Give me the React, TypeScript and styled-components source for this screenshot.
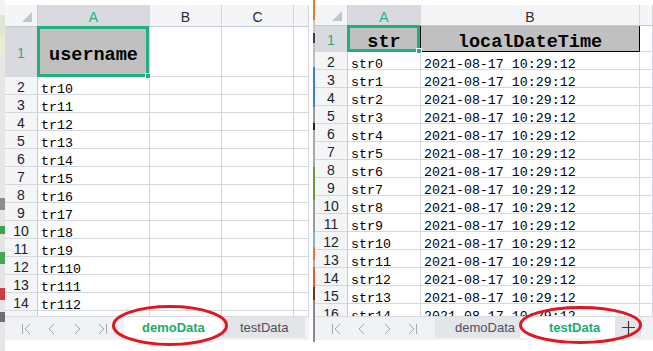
import React from 'react';
import styled, { createGlobalStyle } from 'styled-components';

const GlobalStyle = createGlobalStyle`
  *, *::before, *::after { box-sizing: border-box; }
  html, body {
    margin: 0;
    padding: 0;
    background: #fff;
  }
  body {
    width: 653px;
    height: 351px;
    overflow: hidden;
    font-family: "Liberation Sans", Arial, sans-serif;
  }
`;

const GREEN = '#21b07b';
const GRID = '#d4d7de';
const HEAD_BG = '#f4f5f7';
const HEAD_ON = '#d8dadf';

const Page = styled.div`
  position: relative;
  display: flex;
  width: 653px;
  height: 351px;
  overflow: hidden;
  background: #fff;
`;

// slivers of other windows peeking in at the edges
const Strip = styled.div<{ $w: number }>`
  flex: none;
  width: ${p => p.$w}px;
  display: flex;
  flex-direction: column;
`;

const Seg = styled.div<{ $h: number; $c: string }>`
  flex: none;
  height: ${p => p.$h}px;
  background: ${p => p.$c};
`;

const Gap = styled.div<{ $w: number }>`
  flex: none;
  width: ${p => p.$w}px;
  background: #fff;
`;

const Panel = styled.div<{ $w: number }>`
  flex: none;
  width: ${p => p.$w}px;
  height: 351px;
  display: flex;
  flex-direction: column;
  padding-top: 5px;
  background: #fff;
`;

const Sheet = styled.div<{ $cols: string; $rows: string }>`
  display: grid;
  grid-template-columns: ${p => p.$cols};
  grid-template-rows: ${p => p.$rows};
  height: 311px;
  overflow: hidden;
  background: #fff;
`;

const Corner = styled.div`
  background: ${HEAD_BG};
  border-right: 1px solid #cdd0d6;
  border-bottom: 1px solid #c6c9cf;
  display: flex;
  align-items: flex-end;
  justify-content: flex-end;
  padding: 0 5px 4px 0;

  &::after {
    content: '';
    width: 0;
    height: 0;
    border-left: 10px solid transparent;
    border-bottom: 10px solid #c3c5ca;
  }
`;

const ColHead = styled.div<{ $on?: boolean }>`
  background: ${p => (p.$on ? HEAD_ON : HEAD_BG)};
  color: ${p => (p.$on ? '#2aae7d' : '#2a2a33')};
  border-right: 1px solid #d6d8dd;
  border-bottom: 1px solid #c6c9cf;
  font-size: 14px;
  line-height: 20px;
  padding-top: 2px;
  text-align: center;
  overflow: hidden;
`;

const RowHead = styled.div<{ $on?: boolean }>`
  background: ${p => (p.$on ? HEAD_ON : HEAD_BG)};
  color: ${p => (p.$on ? '#2aae7d' : '#22222a')};
  border-right: 1px solid #c6c9cf;
  border-bottom: 1px solid #d6d8dd;
  font-size: 14px;
  padding-top: 2px;
  display: flex;
  align-items: center;
  justify-content: center;
  overflow: hidden;
`;

const Cell = styled.div<{ $fill?: string; $edge?: string }>`
  background: ${p => p.$fill ?? '#fff'};
  border-right: 1px solid ${p => p.$edge ?? GRID};
  border-bottom: 1px solid ${p => p.$edge ?? GRID};
  color: #000;
  font-family: "Liberation Mono", "DejaVu Sans Mono", monospace;
  font-size: 13.3px;
  line-height: 17px;
  padding: 3.5px 3px 0;
  white-space: nowrap;
`;

const TitleCell = styled(Cell)<{ $sel?: boolean }>`
  position: ${p => (p.$sel ? 'relative' : 'static')};
  display: flex;
  align-items: center;
  justify-content: center;
  padding: 7px 0 0;
  font-size: 18.5px;
  line-height: normal;
  font-weight: bold;
`;

const Frame = styled.div`
  position: absolute;
  top: -1px;
  left: -1px;
  right: 0;
  bottom: -1px;
  border: 3px solid ${GREEN};
  pointer-events: none;
  z-index: 2;

  &::after {
    content: '';
    position: absolute;
    right: -5px;
    bottom: -5px;
    width: 6px;
    height: 6px;
    background: ${GREEN};
    border: 1px solid #fff;
  }
`;

const TabBar = styled.div`
  flex: none;
  height: 24px;
  display: flex;
  align-items: flex-start;
  background: #f1f2f5;
  border-top: 1px solid #d9dbe0;
`;

const Nav = styled.div`
  flex: none;
  display: flex;
  align-items: center;
  height: 23px;
  padding-left: 9px;
`;

const NavBtn = styled.div`
  width: 25px;
  display: flex;
  justify-content: center;
  color: #a3a6ab;
`;

const Tab = styled.div<{ $w: number; $pl: number; $ml: number; $on?: boolean }>`
  flex: none;
  width: ${p => p.$w}px;
  height: 21px;
  margin-left: ${p => p.$ml}px;
  padding: 1px 0 0 ${p => p.$pl}px;
  background: ${p => (p.$on ? '#fff' : '#e4e5e9')};
  color: ${p => (p.$on ? '#20ab6d' : '#4e4e5c')};
  font-size: 13px;
  line-height: 20px;
  font-weight: ${p => (p.$on ? 700 : 400)};
  white-space: nowrap;
`;

const AddTab = styled.div`
  flex: none;
  width: 26px;
  height: 21px;
  background: #e4e5e9;
  display: flex;
  align-items: center;
  justify-content: center;
  color: #3a3a3a;
`;

const Footer = styled.div`
  flex: 1;
  background: #fff;
`;

const Marks = styled.svg`
  position: absolute;
  left: 0;
  top: 0;
  pointer-events: none;
`;

const Arrow = ({ d }: { d: string }) => (
  <svg width="12" height="12" viewBox="0 0 12 12" fill="none" stroke="currentColor" strokeWidth={1}>
    <path d={d} />
  </svg>
);

const NavArrows = () => (
  <Nav>
    <NavBtn><Arrow d="M1.5 1v10M9 1L4 6l5 5" /></NavBtn>
    <NavBtn><Arrow d="M8 1L3 6l5 5" /></NavBtn>
    <NavBtn><Arrow d="M4 1l5 5-5 5" /></NavBtn>
    <NavBtn><Arrow d="M3 1l5 5-5 5M10.5 1v10" /></NavBtn>
  </Nav>
);

const leftStrip: [number, string][] = [
  [15, '#f2f2f2'], [20, '#dfe6d8'], [20, '#ecebd6'], [143, '#e6e6e6'], [12, '#8e8e8e'],
  [16, '#e4e4e4'], [8, '#3fa34d'], [18, '#e4e4e4'], [12, '#4aa55a'], [24, '#e4e4e4'],
  [12, '#d03a40'], [12, '#e6e6e6'], [10, '#707070'], [29, '#e6e6e6'],
];

const rightStrip: [number, string][] = [
  [20, '#e0783a'], [13, '#c8c8c8'], [10, '#3a3a4a'], [24, '#bdbdbd'], [40, '#3b82c4'],
  [16, '#9a9a9a'], [7, '#222'], [37, '#a8a8a8'], [33, '#6a9a3a'], [33, '#9a9a9a'],
  [14, '#7fb6d8'], [13, '#e07838'], [7, '#b0b0b0'], [20, '#d9622b'], [13, '#5a3a20'],
  [42, '#8a8a8a'], [9, '#fff'],
];

const leftRows = Array.from({ length: 14 }, (_, i) => ({ n: i + 2, name: `tr1${i}` }));
const rightRows = Array.from({ length: 15 }, (_, i) => ({ n: i + 2, name: `str${i}` }));

const App = () => {
  return (
    <>
      <GlobalStyle />
      <Page>
        <Strip $w={5}>
          {leftStrip.map(([h, c], i) => <Seg key={i} $h={h} $c={c} />)}
        </Strip>

        <Panel $w={304}>
          <Sheet $cols="33px 112px 72px 72px 15px" $rows="22px 50px repeat(14, 18px)">
            <Corner />
            <ColHead $on>A</ColHead>
            <ColHead>B</ColHead>
            <ColHead>C</ColHead>
            <ColHead />

            <RowHead $on>1</RowHead>
            <TitleCell $fill="#c0c0c0" $sel>
              username
              <Frame />
            </TitleCell>
            <Cell />
            <Cell />
            <Cell />

            {leftRows.map(r => (
              <React.Fragment key={r.n}>
                <RowHead>{r.n}</RowHead>
                <Cell>{r.name}</Cell>
                <Cell />
                <Cell />
                <Cell />
              </React.Fragment>
            ))}
          </Sheet>
          <TabBar>
            <NavArrows />
            <Tab $w={98} $pl={18} $ml={10} $on>demoData</Tab>
            <Tab $w={82} $pl={17} $ml={1}>testData</Tab>
          </TabBar>
          <Footer />
        </Panel>

        <Gap $w={4} />
        <Strip $w={2}>
          {rightStrip.map(([h, c], i) => <Seg key={i} $h={h} $c={c} />)}
        </Strip>

        <Panel $w={338}>
          <Sheet $cols="33px 73px 219px 13px" $rows="21px 26px repeat(15, 18px)">
            <Corner />
            <ColHead $on>A</ColHead>
            <ColHead>B</ColHead>
            <ColHead />

            <RowHead $on>1</RowHead>
            <TitleCell $fill="#c0c0c0" $edge="#000" $sel>
              str
              <Frame />
            </TitleCell>
            <TitleCell $fill="#c0c0c0" $edge="#000">localDateTime</TitleCell>
            <Cell />

            {rightRows.map(r => (
              <React.Fragment key={r.n}>
                <RowHead>{r.n}</RowHead>
                <Cell>{r.name}</Cell>
                <Cell>2021-08-17 10:29:12</Cell>
                <Cell />
              </React.Fragment>
            ))}
          </Sheet>
          <TabBar>
            <NavArrows />
            <Tab $w={85} $pl={20} $ml={11}>demoData</Tab>
            <Tab $w={94} $pl={28} $ml={1} $on>testData</Tab>
            <AddTab>
              <svg width="13" height="13" viewBox="0 0 13 13" stroke="currentColor" strokeWidth={1.2}>
                <path d="M6.5 0v13M0 6.5h13" />
              </svg>
            </AddTab>
          </TabBar>
          <Footer />
        </Panel>

        <Marks width="653" height="351" viewBox="0 0 653 351">
          <ellipse cx="170" cy="325.5" rx="56.5" ry="19" fill="none" stroke="#e3151f" strokeWidth={3} />
          <ellipse cx="580.5" cy="325" rx="60" ry="17.5" fill="none" stroke="#e3151f" strokeWidth={3} />
        </Marks>
      </Page>
    </>
  );
};

export default App;
